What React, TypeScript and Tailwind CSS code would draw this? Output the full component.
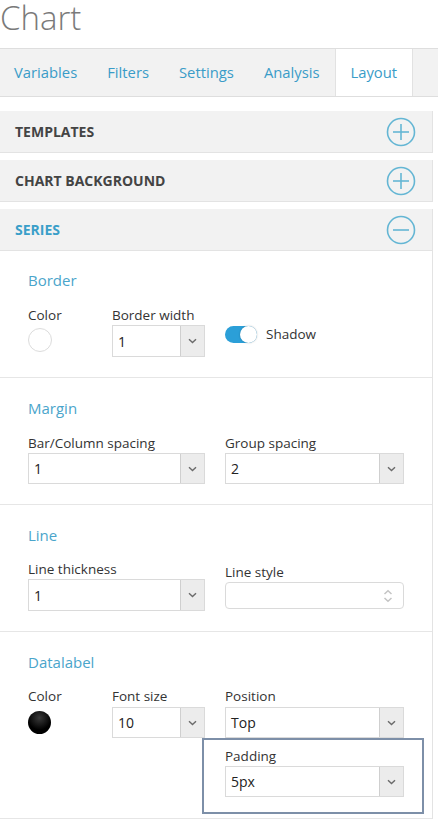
import React from "react";

const font = { fontFamily: '"Open Sans", "Noto Sans", sans-serif' };

function Chevron() {
  return (
    <svg width="9" height="6" viewBox="0 0 9 6">
      <path d="M1 1.2 L4.5 4.6 L8 1.2" fill="none" stroke="#6b6b6b" strokeWidth="1.4" />
    </svg>
  );
}

function Select({ value, className = "" }: { value: string; className?: string }) {
  return (
    <div className={`flex h-[31px] border border-[#dadada] bg-white ${className}`}>
      <div className="flex flex-1 items-center pl-[5px] text-[14px] text-[#222]">{value}</div>
      <div className="flex w-[24px] items-center justify-center border-l border-[#cfcfcf] bg-[#ececec]">
        <Chevron />
      </div>
    </div>
  );
}

function CircleIcon({ plus }: { plus: boolean }) {
  return (
    <svg width="30" height="30" viewBox="0 0 30 30">
      <circle cx="15" cy="15" r="13.5" fill="none" stroke="#64b6d4" strokeWidth="1.6" />
      <path d="M7 15 H23" stroke="#64b6d4" strokeWidth="1.6" />
      {plus && <path d="M15 7 V23" stroke="#64b6d4" strokeWidth="1.6" />}
    </svg>
  );
}

function Header({ title, open, active }: { title: string; open: boolean; active?: boolean }) {
  return (
    <div className="flex h-[42px] items-center justify-between border-b border-r border-[#e3e3e3] bg-[#f2f2f2] pl-[15px] pr-[16px]">
      <span className={`text-[14px] font-bold ${active ? "text-[#3a9fc9]" : "text-[#444]"}`}>{title}</span>
      <CircleIcon plus={!open} />
    </div>
  );
}

function Label({ children, className = "" }: { children: React.ReactNode; className?: string }) {
  return <div className={`h-[18px] text-[13.5px] leading-[18px] text-[#333] ${className}`}>{children}</div>;
}

function SectionTitle({ children }: { children: React.ReactNode }) {
  return <div className="h-[20px] text-[15px] leading-[20px] text-[#4aa5cb]">{children}</div>;
}

export default function App() {
  const tabs = ["Variables", "Filters", "Settings", "Analysis", "Layout"];
  return (
    <div className="h-[819px] w-[438px] overflow-hidden bg-white" style={font}>
      <div className="h-[36px] text-[33px] font-light leading-[36px] text-[#7a7a7a]">Chart</div>
      <div className="mt-[12px] flex h-[49px] border-y border-[#dedede] bg-[#f2f2f2]">
        {tabs.map((t) => (
          <div
            key={t}
            className={`flex items-center px-[15px] text-[14.8px] text-[#3a9cc8] ${
              t === "Layout" ? "border-x border-[#e2e2e2] bg-white px-[14px]" : ""
            } ${t === "Variables" ? "pl-[14px]" : ""}`}
          >
            {t}
          </div>
        ))}
      </div>

      <div className="mt-[14px] w-[433px]">
        <Header title="TEMPLATES" open={false} />
        <div className="h-[7px]" />
        <Header title="CHART BACKGROUND" open={false} />
        <div className="h-[7px]" />
        <Header title="SERIES" open active />

        <div className="border-r border-[#e3e3e3]">
          {/* Border */}
          <div className="border-b border-[#e6e6e6] pb-[20px] pl-[28px] pt-[19px]">
            <SectionTitle>Border</SectionTitle>
            <div className="mt-[16px] flex">
              <div className="w-[84px]">
                <Label>Color</Label>
                <div className="mt-[4px] h-[24px] w-[24px] rounded-full border border-[#dcdcdc] bg-white" />
              </div>
              <div className="w-[93px]">
                <Label>Border width</Label>
                <Select value="1" className="mt-[1px] h-[32px]" />
              </div>
              <div className="ml-[20px] mt-[19px] flex h-[18px] items-center">
                <div className="relative h-[17px] w-[32px] rounded-full bg-[#2b9fd8]">
                  <div className="absolute right-0 top-0 h-[17px] w-[17px] rounded-full bg-white shadow-[0_0_2px_rgba(0,0,0,0.25)]" />
                </div>
                <span className="ml-[9px] text-[13.5px] text-[#333]">Shadow</span>
              </div>
            </div>
          </div>

          {/* Margin */}
          <div className="border-b border-[#e6e6e6] pb-[20px] pl-[28px] pt-[20px]">
            <SectionTitle>Margin</SectionTitle>
            <div className="mt-[16px] flex">
              <div className="w-[177px]">
                <Label>Bar/Column spacing</Label>
                <Select value="1" className="mt-[1px]" />
              </div>
              <div className="ml-[20px] w-[179px]">
                <Label>Group spacing</Label>
                <Select value="2" className="mt-[1px]" />
              </div>
            </div>
          </div>

          {/* Line */}
          <div className="border-b border-[#e6e6e6] pb-[20px] pl-[28px] pt-[20px]">
            <SectionTitle>Line</SectionTitle>
            <div className="mt-[15px] flex">
              <div className="w-[177px]">
                <Label>Line thickness</Label>
                <Select value="1" className="mt-[1px] h-[32px]" />
              </div>
              <div className="ml-[20px] w-[179px] pt-[3px]">
                <Label>Line style</Label>
                <div className="mt-[1px] flex h-[27px] items-center justify-end rounded-[4px] border border-[#dadada] bg-white pr-[10px]">
                  <svg width="10" height="14" viewBox="0 0 10 14">
                    <path d="M1.5 5 L5 1.8 L8.5 5 M1.5 9 L5 12.2 L8.5 9" fill="none" stroke="#c4c4c4" strokeWidth="1.5" />
                  </svg>
                </div>
              </div>
            </div>
          </div>

          {/* Datalabel */}
          <div className="border-b border-[#e6e6e6] pb-[4px] pl-[28px] pt-[20px]">
            <SectionTitle>Datalabel</SectionTitle>
            <div className="mt-[15px] flex">
              <div className="w-[84px]">
                <Label>Color</Label>
                <div className="mt-[6px] h-[23px] w-[23px] rounded-full bg-[radial-gradient(circle_at_50%_30%,#3a3a3a_0%,#000_60%)]" />
              </div>
              <div className="w-[93px]">
                <Label>Font size</Label>
                <Select value="10" className="mt-[2px]" />
              </div>
              <div className="ml-[20px] w-[179px]">
                <Label>Position</Label>
                <Select value="Top" className="mt-[2px]" />
              </div>
            </div>
            <div className="ml-[174px] w-[222px] border-2 border-[#7d8fa8] pb-[15px] pl-[21px] pt-[7px]">
              <Label>Padding</Label>
              <Select value="5px" className="mt-[1px] w-[179px]" />
            </div>
          </div>
        </div>
      </div>
    </div>
  );
}
